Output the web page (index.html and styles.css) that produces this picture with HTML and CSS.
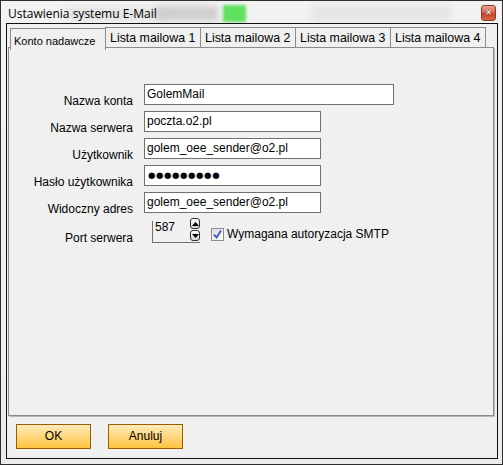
FILE: index.html
```html
<!DOCTYPE html>
<html lang="pl">
<head>
<meta charset="utf-8">
<title>Ustawienia systemu E-Mail</title>
<link rel="stylesheet" href="styles.css">
</head>
<body>
<div class="window">
  <div class="titlebar">
    <div class="glass glass-a"></div>
    <div class="glass glass-c"></div>
    <div class="glass glass-green"></div>
    <div class="glass glass-b"></div>
    <span class="title">Ustawienia systemu E-Mail</span>
    <div class="close"><span>✕</span></div>
  </div>
  <div class="client">
    <div class="tabs">
      <div class="tab active">Konto nadawcze</div>
      <div class="tab">Lista mailowa 1</div>
      <div class="tab">Lista mailowa 2</div>
      <div class="tab">Lista mailowa 3</div>
      <div class="tab">Lista mailowa 4</div>
    </div>
    <div class="panel">
      <div class="form">
        <label class="lbl">Nazwa konta</label>
        <div class="field wide">GolemMail</div>
        <label class="lbl">Nazwa serwera</label>
        <div class="field">poczta.o2.pl</div>
        <label class="lbl">Użytkownik</label>
        <div class="field">golem_oee_sender@o2.pl</div>
        <label class="lbl">Hasło użytkownika</label>
        <div class="field pass">●●●●●●●●●</div>
        <label class="lbl">Widoczny adres</label>
        <div class="field">golem_oee_sender@o2.pl</div>
        <label class="lbl lbl-port">Port serwera</label>
        <div class="port-row">
          <div class="spinner">
            <span class="spin-val">587</span>
            <div class="spin-btns">
              <div class="spin-btn"><svg width="7" height="4" viewBox="0 0 7 4"><path d="M0 4 L3.5 0 L7 4 Z" fill="#000"/></svg></div>
              <div class="spin-btn"><svg width="7" height="4" viewBox="0 0 7 4"><path d="M0 0 L3.5 4 L7 0 Z" fill="#000"/></svg></div>
            </div>
          </div>
          <div class="check">
            <span class="box"><svg width="11" height="11" viewBox="0 0 11 11"><path d="M2 5.5 L4.5 8.5 L9 1.5" fill="none" stroke="#3a56c8" stroke-width="1.8"/></svg></span>
            <span class="check-lbl">Wymagana autoryzacja SMTP</span>
          </div>
        </div>
      </div>
    </div>
    <div class="buttons">
      <div class="btn">OK</div>
      <div class="btn">Anuluj</div>
    </div>
  </div>
</div>
</body>
</html>
```
FILE: styles.css
```css
html, body {
  margin: 0;
  padding: 0;
  background: #ffffff;
}
.window {
  width: 503px;
  height: 465px;
  box-sizing: border-box;
  border: 1px solid #2e2e2e;
  padding: 0 4px 5px 5px;
  background: linear-gradient(#f3f3f3, #ececec);
  display: flex;
  flex-direction: column;
  font-family: "Liberation Sans", Arial, sans-serif;
  font-size: 12px;
  color: #000;
}
.titlebar {
  position: relative;
  height: 22px;
  flex: none;
  overflow: hidden;
}
.glass {
  position: absolute;
  filter: blur(3px);
}
.glass-a {
  left: 60px; top: 7px; width: 100px; height: 12px;
  background: #e2e2e2;
}
.glass-c {
  left: 150px; top: 5px; width: 62px; height: 15px;
  background: #cfcfcf;
}
.glass-green {
  left: 217px; top: 4px; width: 23px; height: 17px;
  background: #5fe05f;
  filter: blur(1.5px);
}
.glass-b {
  left: 305px; top: 4px; width: 140px; height: 18px;
  background: #e6e6e6;
}
.title {
  position: relative;
  display: block;
  padding: 5px 0 0 2px;
  font-family: "Open Sans", "Noto Sans", sans-serif;
  font-size: 12px;
  line-height: 16px;
  color: #000;
}
.close {
  position: absolute;
  right: 2px;
  top: 4px;
  width: 13px;
  height: 14px;
  border: 1px solid #8d3a2a;
  border-radius: 3px;
  background: linear-gradient(#eaa793 0%, #d8674f 45%, #c4402a 55%, #d46a48 100%);
  display: flex;
  align-items: center;
  justify-content: center;
}
.close span {
  color: #fff;
  font-family: "DejaVu Sans", sans-serif;
  font-size: 8px;
  font-weight: bold;
  line-height: 8px;
  text-shadow: 0 0 1px #333;
}
.client {
  flex: 1;
  border: 1px solid #101010;
  background: #f0f0f0;
  display: flex;
  flex-direction: column;
  padding: 3px 2px 0 1px;
}
.tabs {
  display: flex;
  height: 20px;
  padding-left: 2px;
  flex: none;
  position: relative;
  z-index: 1;
}
.tab {
  height: 20px;
  border: 1px solid #8c8c8c;
  border-bottom: none;
  margin-left: -1px;
  background: #f0f0f0;
  font-size: 12.4px;
  line-height: 20px;
  padding-left: 4px;
  box-sizing: border-box;
  width: 96px;
  white-space: nowrap;
}
.tab:first-child {
  margin-left: 0;
}
.tab.active {
  height: 22px;
  margin-top: 1px;
  font-size: 11px;
  line-height: 24px;
  padding-left: 3px;
  background: #f0f0f0;
}
.panel {
  flex: 1;
  border: 1px solid #8c8c8c;
  box-shadow: 1px 1px 0 #b8b8b8;
  margin-right: 1px;
  padding-top: 36px;
}
.form {
  display: grid;
  grid-template-columns: 124px auto;
  grid-auto-rows: 21px;
  row-gap: 6px;
  column-gap: 11px;
  align-items: start;
}
.lbl {
  text-align: right;
  line-height: 14px;
  padding-top: 10px;
  white-space: nowrap;
}
.lbl-port {
  padding-top: 12px;
}
.field {
  width: 177px;
  height: 21px;
  box-sizing: border-box;
  border: 1px solid #707070;
  background: #fff;
  padding-left: 2px;
  line-height: 18px;
  white-space: nowrap;
}
.field.wide {
  width: 250px;
}
.field.pass {
  font-size: 8.5px;
  letter-spacing: 0.6px;
  padding-left: 3px;
  font-family: "DejaVu Sans", sans-serif;
}
.port-row {
  display: flex;
  align-items: flex-start;
  height: 24px;
  padding-left: 8px;
}
.spinner {
  width: 48px;
  height: 22px;
  margin-top: 2px;
  box-sizing: border-box;
  border-left: 1px solid #707070;
  border-bottom: 1px solid #707070;
  display: flex;
  justify-content: space-between;
}
.spin-val {
  padding-left: 2px;
  line-height: 13px;
}
.spin-btns {
  display: flex;
  flex-direction: column;
  gap: 0;
  margin-top: -3px;
  margin-right: 0;
}
.spin-btn {
  width: 8px;
  height: 9px;
  border: 1px solid #2e2e2e;
  border-radius: 3px;
  background: linear-gradient(#ffffff, #d4d4d4);
  display: flex;
  align-items: center;
  justify-content: center;
  margin-bottom: 1px;
}
.check {
  display: flex;
  align-items: center;
  margin-left: 11px;
  margin-top: 8px;
}
.box {
  width: 11px;
  height: 11px;
  border: 1px solid #8f8f8f;
  background: linear-gradient(135deg, #dcdcdc, #ffffff);
  display: flex;
}
.check-lbl {
  margin-left: 3px;
  line-height: 14px;
}
.buttons {
  flex: none;
  display: flex;
  gap: 17px;
  padding: 8px 0 9px 8px;
}
.btn {
  width: 75px;
  height: 25px;
  box-sizing: border-box;
  border: 1px solid #9a5e00;
  background: linear-gradient(#ffebb8, #ffd77e 50%, #ffc340);
  text-align: center;
  line-height: 23px;
  font-size: 12px;
}
```
